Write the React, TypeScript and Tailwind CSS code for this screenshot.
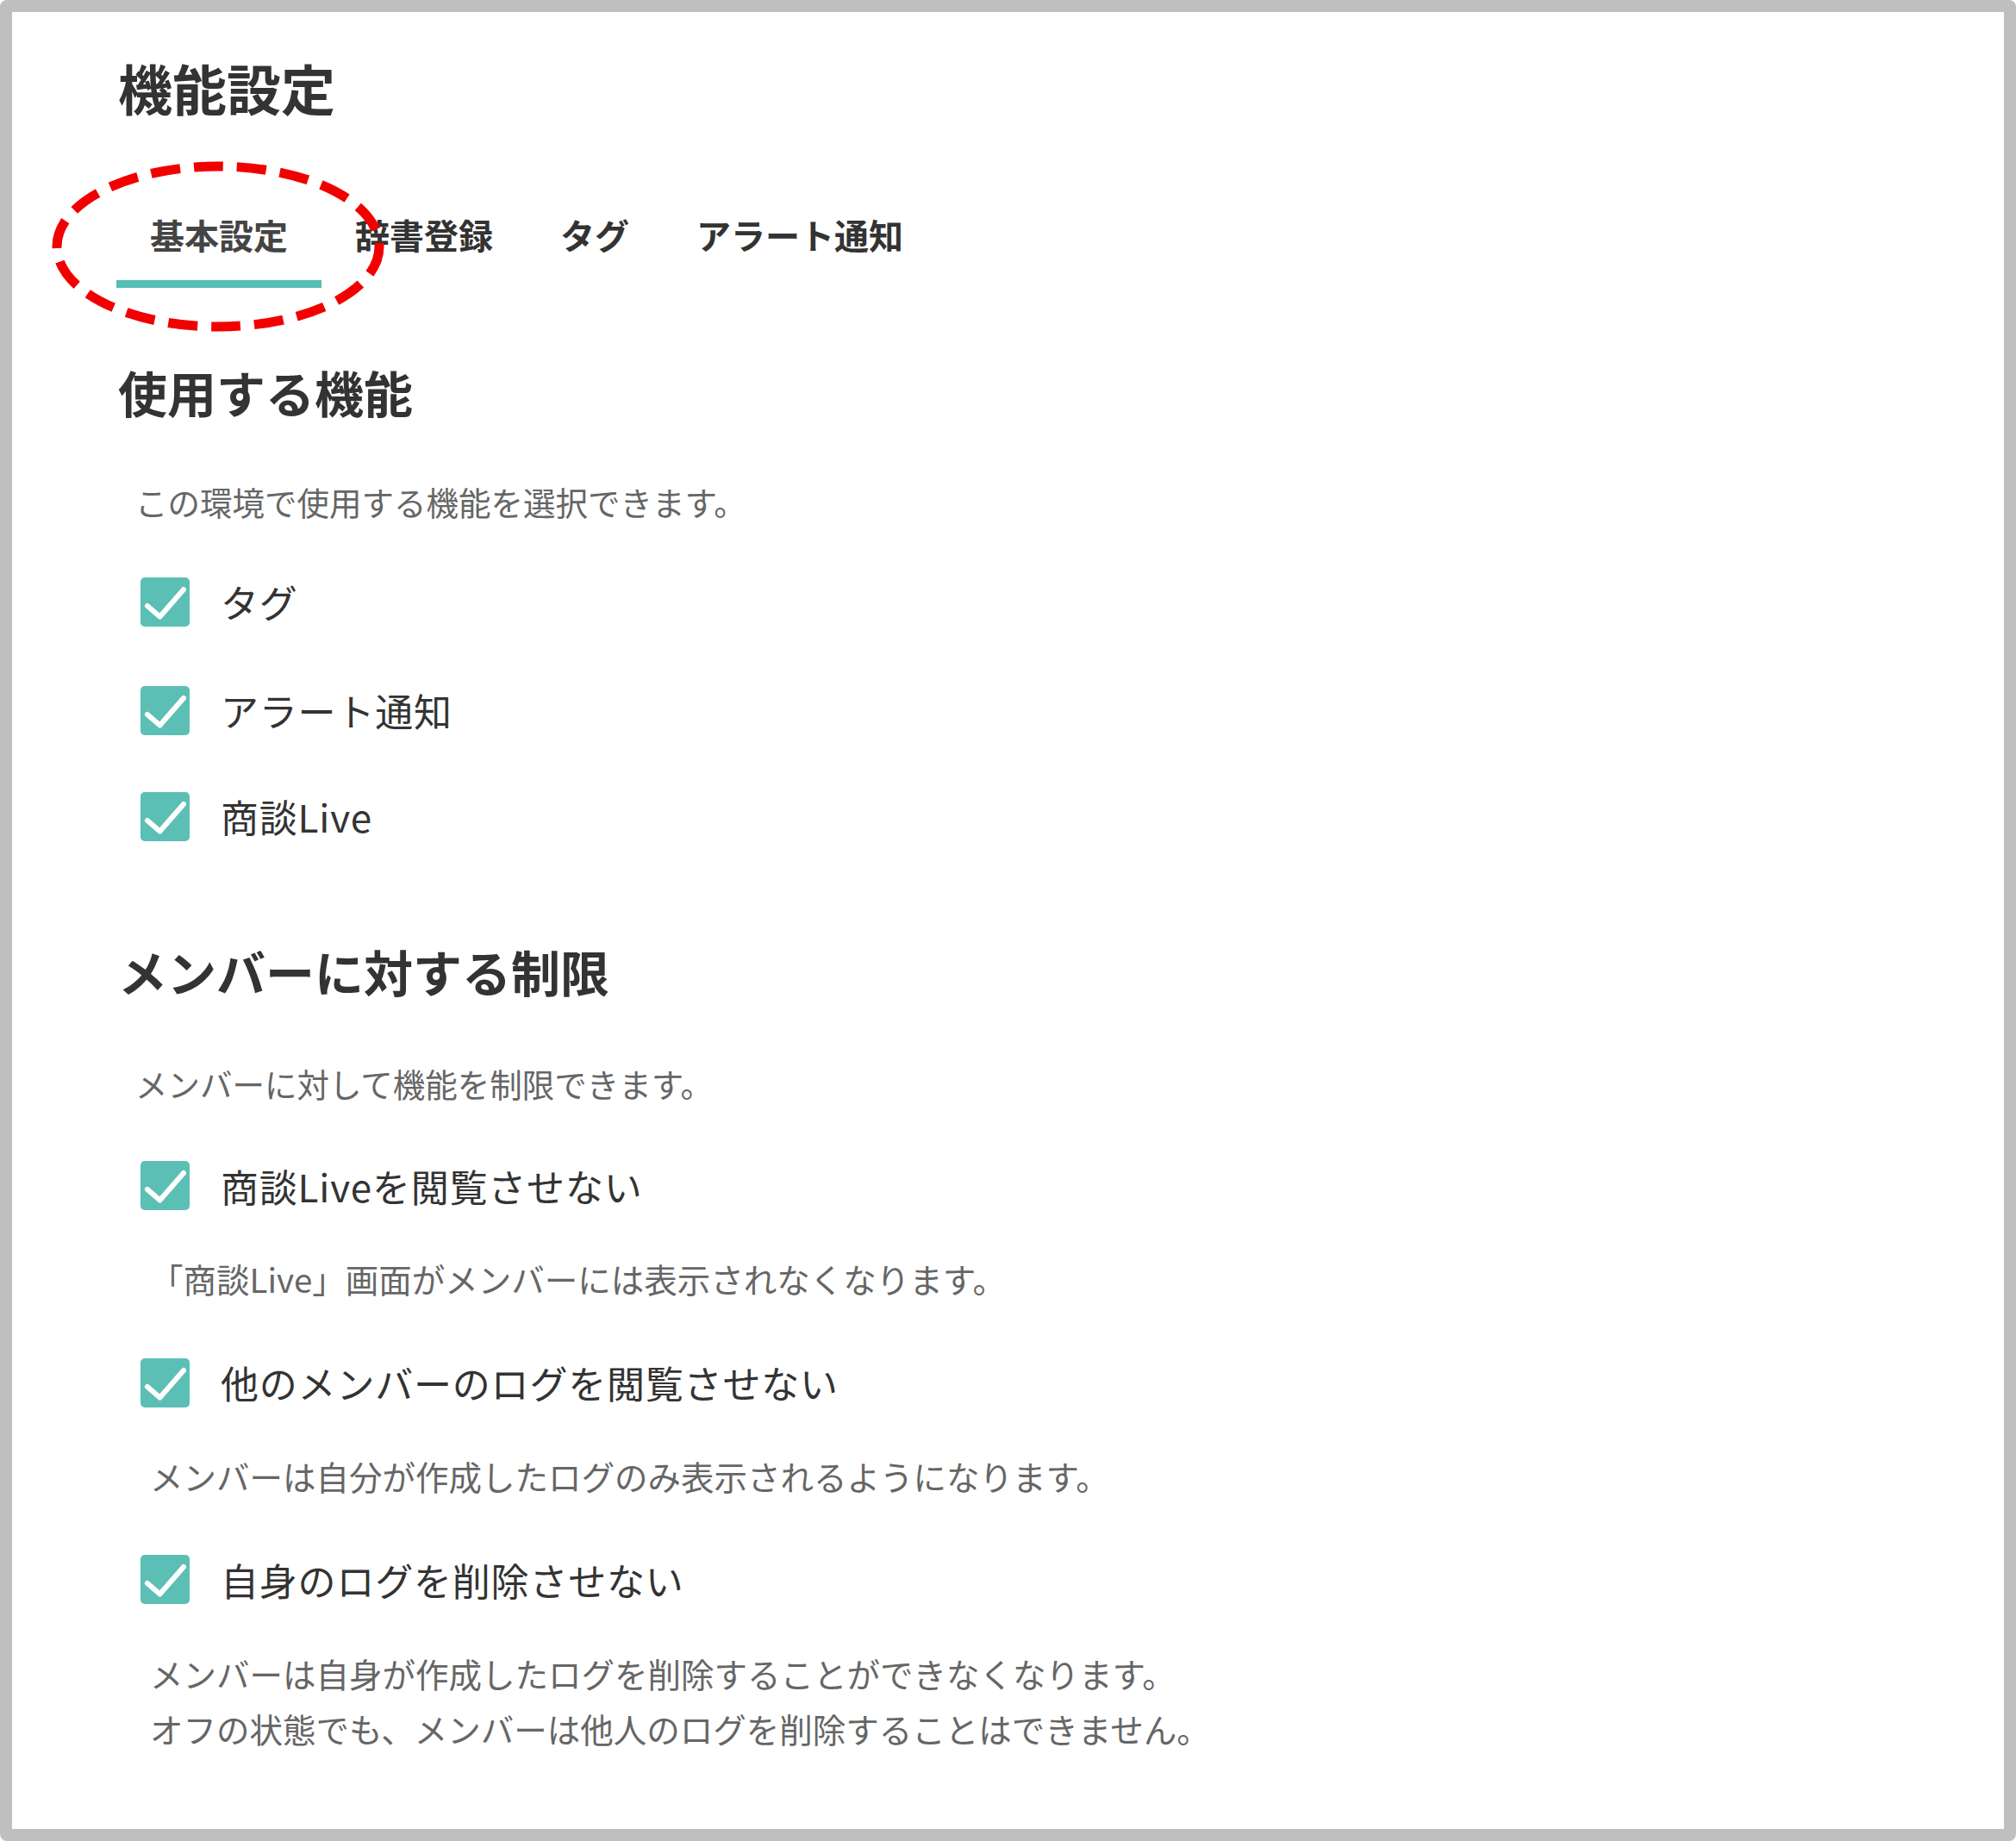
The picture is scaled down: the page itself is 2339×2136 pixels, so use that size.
import React from 'react';

const font = { fontFamily: '"Noto Sans CJK JP", "Noto Sans", sans-serif' };

const tabs = ['基本設定', '辞書登録', 'タグ', 'アラート通知'];

// Teal checked box
function CheckBox() {
  return (
    <div className="w-[57px] h-[57px] rounded-[5px] bg-[#5bbfb5] flex-none">
      <svg width="57" height="57" viewBox="0 0 57 57">
        <path d="M8 33 L22.5 45.5 L50 14" fill="none" stroke="#ffffff" strokeWidth="6" strokeLinecap="round" strokeLinejoin="round" />
      </svg>
    </div>
  );
}

function CheckRow({ label, className = '' }: { label: string; className?: string }) {
  return (
    <div className={`flex items-center ml-[26px] ${className}`}>
      <CheckBox />
      <span className="ml-[36px] text-[44px] leading-none tracking-[0.8px] text-[#333333]">{label}</span>
    </div>
  );
}

export default function App() {
  return (
    <div
      style={font}
      className="relative w-[2339px] h-[2136px] border-[14px] border-[#bfbfbf] rounded-[8px] bg-white pl-[123px] pt-[55px]"
    >
      {/* title */}
      <h1 className="text-[63px] leading-none font-bold text-[#333333]">機能設定</h1>

      {/* tabs */}
      <div className="flex mt-[120px] -ml-[2px]">
        {tabs.map((t, i) => (
          <div
            key={t}
            className={`px-[39px] pb-[33px] text-[40px] leading-none font-bold border-b-[9px] ${
              i === 0 ? 'border-[#55bfb5] text-[#444444]' : 'border-transparent text-[#333333]'
            }`}
          >
            {t}
          </div>
        ))}
      </div>

      {/* section 1 */}
      <h2 className="mt-[92px] text-[57px] leading-none font-bold text-[#333333]">使用する機能</h2>
      <p className="mt-[80px] ml-[20px] text-[37.5px] leading-none text-[#666666]">
        この環境で使用する機能を選択できます。
      </p>
      <CheckRow label="タグ" className="mt-[69px]" />
      <CheckRow label="アラート通知" className="mt-[69px]" />
      <CheckRow label="商談Live" className="mt-[66px]" />

      {/* section 2 */}
      <h2 className="mt-[122px] text-[57px] leading-none font-bold text-[#333333]">メンバーに対する制限</h2>
      <p className="mt-[83px] ml-[20px] text-[37.5px] leading-none text-[#666666]">
        メンバーに対して機能を制限できます。
      </p>
      <CheckRow label="商談Liveを閲覧させない" className="mt-[72px]" />
      <p className="mt-[60px] ml-[37px] text-[38.5px] leading-none text-[#666666]">
        「商談Live」画面がメンバーには表示されなくなります。
      </p>
      <CheckRow label="他のメンバーのログを閲覧させない" className="mt-[73px]" />
      <p className="mt-[60px] ml-[37px] text-[38.5px] leading-none text-[#666666]">
        メンバーは自分が作成したログのみ表示されるようになります。
      </p>
      <CheckRow label="自身のログを削除させない" className="mt-[73px]" />
      <p className="mt-[48px] ml-[37px] text-[38.5px] leading-[64px] text-[#666666]">
        メンバーは自身が作成したログを削除することができなくなります。
        <br />
        オフの状態でも、メンバーは他人のログを削除することはできません。
      </p>

      {/* red dashed annotation */}
      <svg
        className="absolute left-[46px] top-[173px] pointer-events-none"
        width="386"
        height="198"
        viewBox="0 0 386 198"
      >
        <ellipse cx="193" cy="99" rx="187" ry="93" fill="none" stroke="#f20000" strokeWidth="11" strokeDasharray="34 16" />
      </svg>
    </div>
  );
}
